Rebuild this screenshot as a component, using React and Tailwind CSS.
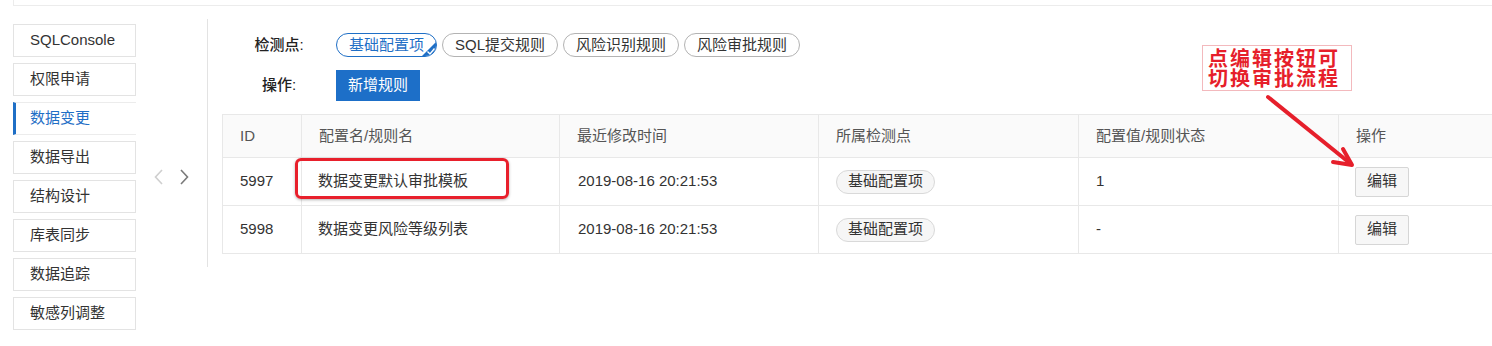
import React from "react";

const menu = ["SQLConsole", "权限申请", "数据变更", "数据导出", "结构设计", "库表同步", "数据追踪", "敏感列调整"];

const points = ["基础配置项", "SQL提交规则", "风险识别规则", "风险审批规则"];

const rows = [
    { id: 5997, name: "数据变更默认审批模板", time: "2019-08-16 20:21:53", point: "基础配置项", value: "1", marked: true },
    { id: 5998, name: "数据变更风险等级列表", time: "2019-08-16 20:21:53", point: "基础配置项", value: "-" },
];

function Chevron({ dir, color }) {
    return (
        <svg width="9" height="16" viewBox="0 0 9 16" fill="none">
            <path
                d={dir === "left" ? "M8 1 L1.5 8 L8 15" : "M1 1 L7.5 8 L1 15"}
                stroke={color}
                strokeWidth="1.6"
            />
        </svg>
    );
}

export default function App() {
    return (
        <main className="relative w-full h-[346px] overflow-hidden bg-white text-[#333] font-['Liberation_Sans','Noto_Sans_CJK_SC',sans-serif]">
            {/* top panel edge */}
            <div className="ml-[13px] h-[6px] border-l border-b border-[#ececec]" />

            <div className="flex mt-[13px]">
                {/* side menu */}
                <nav className="shrink-0 ml-[13px] mt-[5px] w-[123px] flex flex-col gap-[6px]">
                    {menu.map((item) =>
                        item === "数据变更" ? (
                            <div
                                key={item}
                                className="h-[33px] flex items-center pl-[14px] border-y border-[#ececec] border-l-[3px] border-l-[#1f6fc6] text-[15px] text-[#1f6fc6]"
                            >
                                {item}
                            </div>
                        ) : (
                            <div
                                key={item}
                                className="h-[33px] flex items-center pl-[16px] border border-[#e3e3e3] text-[15px] text-[#333]"
                            >
                                {item}
                            </div>
                        )
                    )}
                </nav>

                {/* pager arrows */}
                <div className="shrink-0 w-[71px] flex items-center justify-center gap-[17px] pt-[4px]">
                    <Chevron dir="left" color="#cfcfcf" />
                    <Chevron dir="right" color="#7a7a7a" />
                </div>

                <div className="shrink-0 w-px h-[248px] bg-[#e3e3e3]" />

                {/* content */}
                <section className="shrink-0 pl-[14px] pt-[14px]">
                    <div className="flex items-center h-[24px]">
                        <div className="w-[114px] text-center text-[15px] font-medium text-[#222]">检测点:</div>
                        <div className="flex gap-[5px]">
                            {points.map((p, i) =>
                                i === 0 ? (
                                    <span
                                        key={p}
                                        className="relative overflow-hidden h-[24px] flex items-center px-[12px] rounded-full border border-[#1f6fc6] text-[15px] text-[#1f6fc6]"
                                    >
                                        {p}
                                        <svg className="absolute right-0 bottom-0" width="16" height="16" viewBox="0 0 16 16">
                                            <path d="M16 2 L16 16 L2 16 Z" fill="#1f6fc6" />
                                            <path d="M7.5 11.5 L10 14 L14.5 8.5" stroke="#fff" strokeWidth="1.4" fill="none" />
                                        </svg>
                                    </span>
                                ) : (
                                    <span
                                        key={p}
                                        className="h-[24px] flex items-center px-[12px] rounded-full border border-[#b3b3b3] text-[15px] text-[#333]"
                                    >
                                        {p}
                                    </span>
                                )
                            )}
                        </div>
                    </div>

                    <div className="flex items-center h-[31px] mt-[13px]">
                        <div className="w-[114px] text-center text-[15px] font-medium text-[#222]">操作:</div>
                        <button className="h-[31px] px-[12px] bg-[#1d6fc8] text-white text-[15px]">新增规则</button>
                    </div>

                    <table className="mt-[13px] w-[1300px] table-fixed border-collapse text-[15px]">
                        <colgroup>
                            <col className="w-[79px]" />
                            <col className="w-[258px]" />
                            <col className="w-[259px]" />
                            <col className="w-[260px]" />
                            <col className="w-[260px]" />
                            <col />
                        </colgroup>
                        <thead>
                            <tr className="h-[43px] bg-[#fafafa] text-[#555]">
                                {["ID", "配置名/规则名", "最近修改时间", "所属检测点", "配置值/规则状态", "操作"].map((h) => (
                                    <th key={h} className="border border-[#e8e8e8] pl-[17px] text-left font-normal">
                                        {h}
                                    </th>
                                ))}
                            </tr>
                        </thead>
                        <tbody>
                            {rows.map((r) => (
                                <tr key={r.id} className="h-[48px]">
                                    <td className="border border-[#e8e8e8] pl-[17px]">{r.id}</td>
                                    <td className="relative border border-[#e8e8e8] pl-[16px]">
                                        {r.name}
                                        {r.marked && (
                                            <div className="absolute left-[-7px] top-0 w-[214px] h-[41px] rounded-[6px] border-[3px] border-[#e8202c] shadow-[0_1px_3px_rgba(0,0,0,0.3)]" />
                                        )}
                                    </td>
                                    <td className="border border-[#e8e8e8] pl-[18px]">{r.time}</td>
                                    <td className="border border-[#e8e8e8] pl-[17px]">
                                        <span className="inline-flex items-center h-[24px] px-[11px] rounded-full border border-[#d9d9d9] bg-[#f6f6f6]">
                                            {r.point}
                                        </span>
                                    </td>
                                    <td className="border border-[#e8e8e8] pl-[17px]">{r.value}</td>
                                    <td className="border border-[#e8e8e8] pl-[16px]">
                                        <button className="h-[30px] px-[11px] rounded-[2px] border border-[#d6d6d6] bg-[#f7f7f7]">编辑</button>
                                    </td>
                                </tr>
                            ))}
                        </tbody>
                    </table>
                </section>
            </div>

            {/* annotation */}
            <div className="absolute left-[1202px] top-[45px] w-[150px] h-[46px] border border-[#f3b9bd] pl-[5px] pt-[3px] text-[20px] tracking-[2px] font-semibold text-[#e61f2b]">
                <div className="h-[20px] leading-[20px]">点编辑按钮可</div>
                <div className="h-[20px] leading-[20px]">切换审批流程</div>
            </div>
            <svg className="absolute left-[1260px] top-[90px]" width="100" height="85" viewBox="0 0 100 85" fill="none">
                <g stroke="#e61f2b" strokeWidth="4" strokeLinecap="round" strokeLinejoin="round">
                    <path d="M8 7 L91 74" />
                    <path d="M73 72 L92 75 L83 59" />
                </g>
            </svg>
        </main>
    );
}
